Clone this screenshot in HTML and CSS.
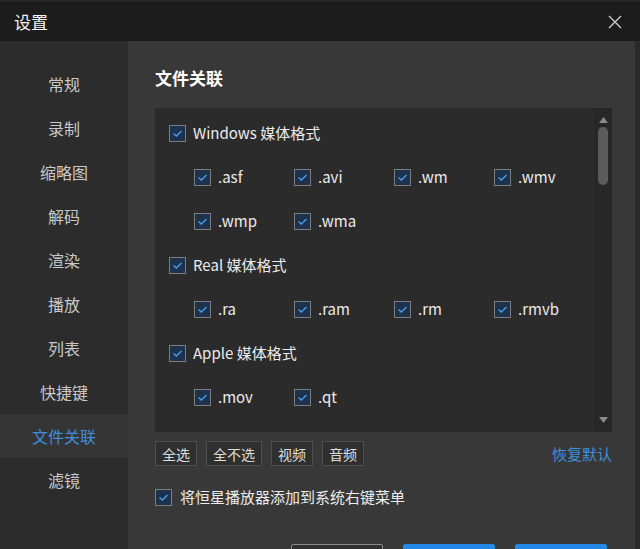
FILE: index.html
```html
<!DOCTYPE html>
<html lang="zh">
<head>
<meta charset="utf-8">
<title>设置</title>
<link rel="stylesheet" href="styles.css">
</head>
<body>
<div class="window">
  <div class="titlebar">
    <span class="title">设置</span>
    <svg class="close" width="14" height="14" viewBox="0 0 14 14"><path d="M1 1L13 13M13 1L1 13" stroke="#d0d0d0" stroke-width="1.3" fill="none"/></svg>
  </div>
  <div class="content">
    <nav class="sidebar">
      <div class="nav-item">常规</div>
      <div class="nav-item">录制</div>
      <div class="nav-item">缩略图</div>
      <div class="nav-item">解码</div>
      <div class="nav-item">渲染</div>
      <div class="nav-item">播放</div>
      <div class="nav-item">列表</div>
      <div class="nav-item">快捷键</div>
      <div class="nav-item active">文件关联</div>
      <div class="nav-item">滤镜</div>
    </nav>
    <main class="main">
      <h1 class="heading">文件关联</h1>
      <div class="panel">
        <div class="list">
          <div class="row group"><span class="cb"><svg viewBox="0 0 17 17"><path d="M4 8.6L7.2 11.4L13 5.6" stroke="#4c9fea" stroke-width="1.5" fill="none"/></svg></span><span class="label">Windows 媒体格式</span></div>
          <div class="row sub">
            <div class="item"><span class="cb"><svg viewBox="0 0 17 17"><path d="M4 8.6L7.2 11.4L13 5.6" stroke="#4c9fea" stroke-width="1.5" fill="none"/></svg></span><span class="label">.asf</span></div>
            <div class="item"><span class="cb"><svg viewBox="0 0 17 17"><path d="M4 8.6L7.2 11.4L13 5.6" stroke="#4c9fea" stroke-width="1.5" fill="none"/></svg></span><span class="label">.avi</span></div>
            <div class="item"><span class="cb"><svg viewBox="0 0 17 17"><path d="M4 8.6L7.2 11.4L13 5.6" stroke="#4c9fea" stroke-width="1.5" fill="none"/></svg></span><span class="label">.wm</span></div>
            <div class="item"><span class="cb"><svg viewBox="0 0 17 17"><path d="M4 8.6L7.2 11.4L13 5.6" stroke="#4c9fea" stroke-width="1.5" fill="none"/></svg></span><span class="label">.wmv</span></div>
          </div>
          <div class="row sub">
            <div class="item"><span class="cb"><svg viewBox="0 0 17 17"><path d="M4 8.6L7.2 11.4L13 5.6" stroke="#4c9fea" stroke-width="1.5" fill="none"/></svg></span><span class="label">.wmp</span></div>
            <div class="item"><span class="cb"><svg viewBox="0 0 17 17"><path d="M4 8.6L7.2 11.4L13 5.6" stroke="#4c9fea" stroke-width="1.5" fill="none"/></svg></span><span class="label">.wma</span></div>
          </div>
          <div class="row group"><span class="cb"><svg viewBox="0 0 17 17"><path d="M4 8.6L7.2 11.4L13 5.6" stroke="#4c9fea" stroke-width="1.5" fill="none"/></svg></span><span class="label">Real 媒体格式</span></div>
          <div class="row sub">
            <div class="item"><span class="cb"><svg viewBox="0 0 17 17"><path d="M4 8.6L7.2 11.4L13 5.6" stroke="#4c9fea" stroke-width="1.5" fill="none"/></svg></span><span class="label">.ra</span></div>
            <div class="item"><span class="cb"><svg viewBox="0 0 17 17"><path d="M4 8.6L7.2 11.4L13 5.6" stroke="#4c9fea" stroke-width="1.5" fill="none"/></svg></span><span class="label">.ram</span></div>
            <div class="item"><span class="cb"><svg viewBox="0 0 17 17"><path d="M4 8.6L7.2 11.4L13 5.6" stroke="#4c9fea" stroke-width="1.5" fill="none"/></svg></span><span class="label">.rm</span></div>
            <div class="item"><span class="cb"><svg viewBox="0 0 17 17"><path d="M4 8.6L7.2 11.4L13 5.6" stroke="#4c9fea" stroke-width="1.5" fill="none"/></svg></span><span class="label">.rmvb</span></div>
          </div>
          <div class="row group"><span class="cb"><svg viewBox="0 0 17 17"><path d="M4 8.6L7.2 11.4L13 5.6" stroke="#4c9fea" stroke-width="1.5" fill="none"/></svg></span><span class="label">Apple 媒体格式</span></div>
          <div class="row sub">
            <div class="item"><span class="cb"><svg viewBox="0 0 17 17"><path d="M4 8.6L7.2 11.4L13 5.6" stroke="#4c9fea" stroke-width="1.5" fill="none"/></svg></span><span class="label">.mov</span></div>
            <div class="item"><span class="cb"><svg viewBox="0 0 17 17"><path d="M4 8.6L7.2 11.4L13 5.6" stroke="#4c9fea" stroke-width="1.5" fill="none"/></svg></span><span class="label">.qt</span></div>
          </div>
        </div>
        <div class="scrollbar">
          <svg class="arrow" width="9" height="6" viewBox="0 0 9 6"><path d="M0 6L4.5 0L9 6Z" fill="#8a8a8a"/></svg>
          <div class="thumb"></div>
          <div class="track-rest"></div>
          <svg class="arrow" width="9" height="6" viewBox="0 0 9 6"><path d="M0 0L4.5 6L9 0Z" fill="#8a8a8a"/></svg>
        </div>
      </div>
      <div class="actions">
        <button class="btn">全选</button>
        <button class="btn">全不选</button>
        <button class="btn">视频</button>
        <button class="btn">音频</button>
        <span class="restore">恢复默认</span>
      </div>
      <div class="context-row"><span class="cb"><svg viewBox="0 0 17 17"><path d="M4 8.6L7.2 11.4L13 5.6" stroke="#4c9fea" stroke-width="1.5" fill="none"/></svg></span><span class="label">将恒星播放器添加到系统右键菜单</span></div>
      <div class="footer">
        <button class="fbtn outline"></button>
        <button class="fbtn primary"></button>
        <button class="fbtn primary"></button>
      </div>
    </main>
  </div>
</div>
</body>
</html>
```
FILE: styles.css
```css
html, body {
  margin: 0;
  padding: 0;
  width: 640px;
  height: 549px;
  overflow: hidden;
  background: #383838;
  font-family: "Noto Sans CJK SC", "Noto Sans", sans-serif;
}
.window {
  display: flex;
  flex-direction: column;
  height: 549px;
}
.titlebar {
  height: 39px;
  border-top: 2px solid #262626;
  background: #1c1c1c;
  display: flex;
  align-items: center;
  justify-content: space-between;
  padding: 0 18px 0 14px;
  flex-shrink: 0;
}
.title {
  color: #f2f2f2;
  font-size: 17px;
  line-height: 20px;
}
.close { display: block; }
.content {
  flex: 1;
  display: flex;
  min-height: 0;
  border-right: 5px solid #2a2a2a;
}
.sidebar {
  width: 128px;
  flex-shrink: 0;
  background: #2c2c2c;
  padding-top: 21px;
}
.nav-item {
  height: 44px;
  display: flex;
  align-items: center;
  justify-content: center;
  color: #c9c9c9;
  font-size: 16px;
}
.nav-item.active {
  background: #353535;
  color: #3f8fdc;
}
.main {
  flex: 1;
  min-width: 0;
  padding: 0 23px 0 27px;
  display: flex;
  flex-direction: column;
}
.heading {
  margin: 27px 0 20px;
  font-size: 17px;
  line-height: 20px;
  font-weight: bold;
  color: #ffffff;
}
.panel {
  height: 324px;
  flex-shrink: 0;
  background: #2b2b2b;
  display: flex;
}
.list {
  flex: 1;
  overflow: hidden;
  padding: 3px 0 0 14px;
}
.row {
  height: 44px;
  display: flex;
  align-items: center;
}
.row.sub { padding-left: 25px; }
.item {
  width: 100px;
  display: flex;
  align-items: center;
}
.cb {
  width: 15px;
  height: 15px;
  border: 1px solid #7d7d7d;
  background: #1d324d;
  flex-shrink: 0;
  display: block;
}
.cb svg { display: block; width: 15px; height: 15px; }
.label {
  color: #ececec;
  font-size: 15px;
  line-height: 18px;
  margin-left: 7px;
}
.scrollbar {
  width: 18px;
  background: #272727;
  display: flex;
  flex-direction: column;
  align-items: center;
  padding: 9px 0 9px;
}
.arrow { display: block; }
.thumb {
  width: 10px;
  height: 58px;
  margin-top: 4px;
  border-radius: 5px;
  background: #5c5c5c;
}
.track-rest { flex: 1; }
.actions {
  margin-top: 9px;
  display: flex;
  align-items: center;
  gap: 9px;
}
.btn {
  height: 25px;
  padding: 0 6px;
  background: #2f2f2f;
  border: 1px solid #4f4f4f;
  color: #dedede;
  font-family: inherit;
  font-size: 14px;
  line-height: 18px;
}
.restore {
  margin-left: auto;
  color: #3f8fdc;
  font-size: 15px;
  line-height: 18px;
}
.context-row {
  margin-top: 22px;
  display: flex;
  align-items: center;
}
.context-row .label { margin-left: 8px; }
.footer {
  margin-top: 38px;
  display: flex;
  justify-content: flex-end;
  gap: 20px;
  padding-right: 5px;
}
.fbtn {
  width: 92px;
  height: 30px;
  border-radius: 2px;
  flex-shrink: 0;
}
.fbtn.outline {
  background: #303030;
  border: 1px solid #8a8a8a;
}
.fbtn.primary {
  background: #2188e8;
  border: 1px solid #2188e8;
}
```
